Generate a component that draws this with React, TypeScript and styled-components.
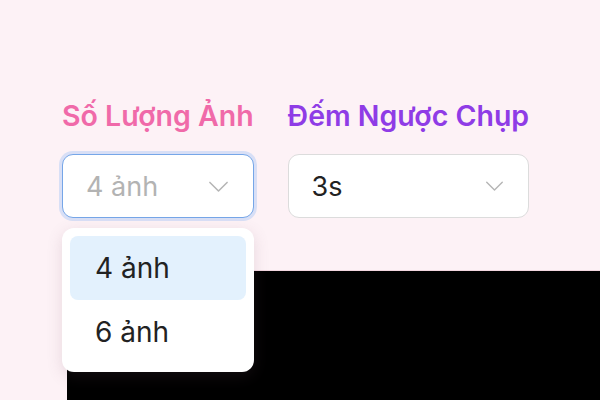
import React from "react";
import styled, { createGlobalStyle } from "styled-components";

const Global = createGlobalStyle`
  html, body { margin: 0; padding: 0; }
  body {
    width: 600px;
    height: 400px;
    overflow: hidden;
    background: #fdf2f6;
    font-family: Inter, "Noto Sans", sans-serif;
  }
`;

const Page = styled.div`
  position: relative;
  width: 600px;
  height: 400px;
  overflow: hidden;
  padding: 97px 0 0 62px;
  box-sizing: border-box;
`;

const Controls = styled.div`
  display: flex;
  gap: 34px;
  align-items: flex-start;
`;

const Field = styled.div`
  position: relative;
  display: flex;
  flex-direction: column;
  gap: 20px;
`;

const Label = styled.div<{ $color: string }>`
  font-size: 28.5px;
  line-height: 37px;
  font-weight: 600;
  color: ${(p) => p.$color};
  white-space: nowrap;
`;

const SelectBox = styled.div<{ $open?: boolean }>`
  height: 64px;
  box-sizing: border-box;
  border-radius: 11px;
  background: #fff;
  border: 1px solid ${(p) => (p.$open ? "#76a6e8" : "#dcdcdc")};
  box-shadow: ${(p) => (p.$open ? "0 0 0 3px rgba(147, 190, 245, 0.35)" : "none")};
  display: flex;
  align-items: center;
  justify-content: space-between;
  padding: 0 24px 0 23px;
`;

const Value = styled.span<{ $muted?: boolean }>`
  font-size: 27px;
  color: ${(p) => (p.$muted ? "#b3b3b3" : "#222")};
`;

const Chevron = ({ w }: { w: number }) => (
  <svg width={w + 6} height={(w + 6) / 2 + 2} viewBox="-1 -1 22 12" fill="none">
    <path d="M1 1 L10 10 L19 1" stroke="#b5b5b5" strokeWidth="1.6" strokeLinecap="round" strokeLinejoin="round" />
  </svg>
);

const Menu = styled.div`
  position: absolute;
  top: 131px;
  left: 0;
  width: 192px;
  box-sizing: border-box;
  padding: 8px;
  background: #fff;
  border-radius: 12px;
  box-shadow: 0 4px 16px rgba(120, 80, 100, 0.16);
  z-index: 2;
  display: flex;
  flex-direction: column;
`;

const Option = styled.div<{ $active?: boolean }>`
  height: 64px;
  border-radius: 8px;
  display: flex;
  align-items: center;
  padding-left: 25px;
  font-size: 28px;
  color: #222;
  background: ${(p) => (p.$active ? "#e3f1fd" : "transparent")};
`;

const Preview = styled.div`
  margin: 53px 0 0 5px;
  height: 200px;
  background: #000;
  box-shadow: 0 -1px 0 #f2d6df;
`;

export default function App() {
  return (
    <>
      <Global />
      <Page>
        <Controls>
          <Field>
            <Label $color="#f06aa9">Số Lượng Ảnh</Label>
            <SelectBox $open>
              <Value $muted>4 ảnh</Value>
              <Chevron w={15} />
            </SelectBox>
            <Menu>
              <Option $active>4 ảnh</Option>
              <Option>6 ảnh</Option>
            </Menu>
          </Field>
          <Field>
            <Label $color="#8f3ce6">Đếm Ngược Chụp</Label>
            <SelectBox>
              <Value>3s</Value>
              <Chevron w={13} />
            </SelectBox>
          </Field>
        </Controls>
        <Preview />
      </Page>
    </>
  );
}
